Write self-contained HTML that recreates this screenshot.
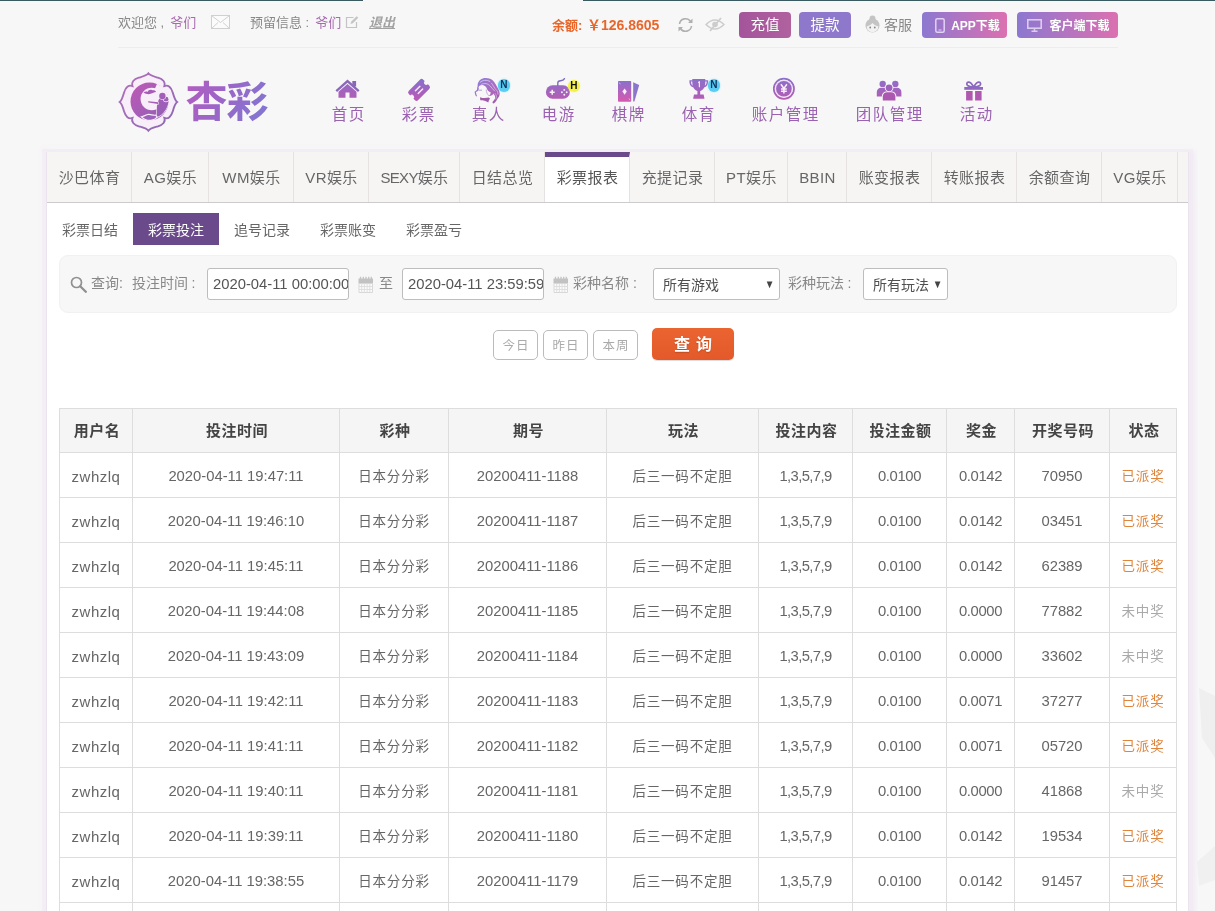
<!DOCTYPE html>
<html lang="zh-CN">
<head>
<meta charset="utf-8">
<title>彩票投注</title>
<style>
*{box-sizing:border-box;margin:0;padding:0}
html,body{width:1215px;height:911px;overflow:hidden}
body{background:#f8f7f8;font-family:"Liberation Sans","Noto Sans CJK SC",sans-serif;color:#666;font-size:14px;position:relative}
#wrap{position:absolute;left:0;top:0;width:1215px;height:911px;overflow:hidden;will-change:transform}
.abs{position:absolute}
.topline{position:absolute;top:0;height:1px;background:#3a5a62;z-index:3}
.topbar{position:absolute;left:118px;top:0;width:1000px;height:48px;border-bottom:1px solid #efecef}
.topbar .t{position:absolute;top:13px;font-size:13px;line-height:20px;color:#888;white-space:nowrap}
.pur{color:#a86aaf;margin-left:2.500px}
.btn{position:absolute;top:12px;height:26px;border-radius:4px;color:#fff;font-size:14px;line-height:26px;text-align:center;white-space:nowrap}
.nav{position:absolute;top:104px;text-align:center;color:#9a62b0;font-size:15.5px;letter-spacing:1.500px;text-indent:1.500px;line-height:22px;white-space:nowrap;transform:translateX(-50%);margin-left:1px}
.bdg{position:absolute;width:12.600px;height:12.600px;border-radius:50%;font-size:10px;line-height:12.600px;text-align:center;font-weight:bold;font-family:'Liberation Sans',sans-serif}
.box{position:absolute;left:46px;top:152px;width:1143px;height:770px;background:#fff;border:1px solid #ebe4ee;box-shadow:0 1px 0 4px rgba(240,234,243,.55),4px 2px 3px 3px rgba(238,230,242,.4),0 0 5px 5px rgba(240,234,244,.3)}
.tabs{position:absolute;left:0;top:-1px;width:1141px;height:51px;background:#f7f5f4;border-bottom:1px solid #ccc}
.tab{position:absolute;top:0;height:50px;border-right:1px solid #e6e2e2;font-size:15px;letter-spacing:.4px;line-height:51px;text-align:center;color:#666;white-space:nowrap;padding-left:1px}
.tab.on{background:#fff;border-top:5px solid #6b4a8b;height:50px;line-height:41px;color:#555}
.sub{position:absolute;top:60px;height:32px;line-height:35px;font-size:14px;color:#666;text-align:center;white-space:nowrap}
.sub.on{background:#6b4a8b;color:#fff}
.search{position:absolute;left:12px;top:102px;width:1118px;height:58px;background:#f7f7f7;border:1px solid #f1f1f1;border-radius:9px}
.search .l{position:absolute;top:17px;font-size:14px;line-height:20px;color:#888;white-space:nowrap}
.inp{position:absolute;top:12px;height:32px;border:1px solid #bdbdbd;border-radius:3px;background:#fff;font-size:14.800px;line-height:30px;color:#555;padding-left:5px;white-space:nowrap;overflow:hidden}
.inp.sel{font-size:14px;padding-left:9px;line-height:33px;color:#505050}
.arr{position:absolute;top:-1px;font-size:11.500px;color:#444;transform:scaleX(.85)}
.qb{position:absolute;top:177px;height:30px;width:45px;border:1px solid #bbb;border-radius:5px;background:#fff;color:#aaa;font-size:12.500px;letter-spacing:1px;text-indent:1px;line-height:30px;text-align:center}
.go{position:absolute;left:605px;top:175px;width:82px;height:32px;border-radius:5px;background:linear-gradient(#ea6430,#e4592a);color:#fff;font-size:16px;font-weight:bold;word-spacing:1.500px;line-height:33px;text-align:center;text-shadow:0 1px 1px rgba(120,40,0,.35);box-shadow:0 1px 1px rgba(0,0,0,.15)}
table{position:absolute;left:12px;top:255px;width:1117px;border-collapse:collapse;table-layout:fixed}
th,td{border:1px solid #ddd;height:45px;text-align:center;font-size:14px;color:#666;white-space:nowrap;overflow:hidden;padding:0}
th{background:#f5f5f5;color:#444;font-weight:bold;font-size:15px;letter-spacing:.5px;padding-bottom:2px;padding-left:2px;height:44.4px}
td.u{font-size:15px;letter-spacing:.5px;padding-top:2px}
td.n{font-size:14.800px;padding-top:1px}
td.k{letter-spacing:-.6px}
td.m{letter-spacing:-.35px}
td.c{font-size:13.500px;letter-spacing:.8px;padding-bottom:0}
td.win{color:#e0843a}
td.no{color:#aaa}
</style>
</head>
<body>
<div id="wrap">
<div class="topline" style="left:0;width:363px"></div>
<div class="topline" style="left:583px;width:632px"></div>
<div class="topbar">
  <span class="t" style="left:0">欢迎您 , <span class="pur">爷们</span></span>
  <svg class="abs" style="left:93px;top:15px" width="19" height="14" viewBox="0 0 19 14"><rect x=".5" y=".5" width="18" height="13" fill="#fbfbfb" stroke="#d0d0d0"/><path d="M.5 .5l9 7 9-7M.5 13.500l6.500-6M18.500 13.500l-6.500-6" fill="none" stroke="#d0d0d0"/></svg>
  <span class="t" style="left:132px">预留信息 : <span class="pur">爷们</span></span>
  <svg class="abs" style="left:227px;top:15.500px" width="14" height="13" viewBox="0 0 14 13"><path d="M8.500 1.500H1.500v10h10V6" fill="none" stroke="#c4c4c4" stroke-width="1.200"/><path d="M5.500 8l.8-2.400 5.400-5.400 1.600 1.600-5.400 5.400z" fill="#c4c4c4"/></svg>
  <span class="t" style="left:251px;font-style:italic;font-weight:bold;text-decoration:underline;color:#a2a2a2">退出</span>
  <span class="t" style="left:434px;top:15px;color:#e8662a;font-weight:bold;font-size:13px">余额: <span style="font-size:14px;margin-left:1px">￥126.8605</span></span>
  <svg class="abs" style="left:559px;top:17px" width="17" height="16" viewBox="0 0 17 16"><path d="M2.500 7a6 6 0 0 1 11-2.500M14.500 9a6 6 0 0 1-11 2.500" fill="none" stroke="#b0b0b0" stroke-width="1.600"/><path d="M15.500 1.500v4.500h-4.500zM1.500 14.500v-4.500h4.500z" fill="#b0b0b0"/></svg>
  <svg class="abs" style="left:587px;top:17px" width="20" height="15" viewBox="0 0 20 15"><path d="M1 7.500q9-9 18 0q-9 9-18 0z" fill="none" stroke="#cdcdcd" stroke-width="1.500"/><circle cx="10" cy="7.500" r="2.800" fill="#cdcdcd"/><path d="M16 1L5 14" stroke="#cdcdcd" stroke-width="1.700"/></svg>
  <div class="btn" style="left:621px;width:52px;background:linear-gradient(90deg,#a4549a,#b0629f);font-size:14.500px">充值</div>
  <div class="btn" style="left:681px;width:52px;background:#8e78cc;font-size:14.500px">提款</div>
  <svg class="abs" style="left:746px;top:15px" width="17" height="18" viewBox="0 0 17 18"><circle cx="8.500" cy="3.500" r="3" fill="#c4c4c4"/><circle cx="8.500" cy="10.500" r="7" fill="#c4c4c4"/><path d="M2.700 11.500q3.500-.5 5.800-3.500 2.300 3 5.800 3.500a5.800 5.800 0 0 1-11.600 0z" fill="#f2f2f2"/><circle cx="6.200" cy="12.500" r=".9" fill="#888"/><circle cx="10.800" cy="12.500" r=".9" fill="#888"/></svg>
  <span class="t" style="left:766px;top:15px;font-size:14px;color:#888">客服</span>
  <div class="btn" style="left:804px;width:85px;background:linear-gradient(90deg,#8c78d0,#dc70b0);font-size:12px;padding-left:22px;font-weight:bold;line-height:28px">APP下载</div>
  <svg class="abs" style="left:817px;top:18px" width="10" height="15" viewBox="0 0 10 15"><rect x=".8" y=".8" width="8.400" height="13.400" rx="1.500" fill="none" stroke="#e2d2f4" stroke-width="1.500"/><path d="M3.500 12h3" stroke="#e2d2f4"/></svg>
  <div class="btn" style="left:899px;width:101px;background:linear-gradient(90deg,#8c78d0,#dc70b0);font-size:12px;padding-left:24px;font-weight:bold;line-height:28px">客户端下载</div>
  <svg class="abs" style="left:909px;top:19px" width="15" height="13" viewBox="0 0 15 13"><rect x=".8" y=".8" width="13.400" height="8.400" fill="none" stroke="#dcccf0" stroke-width="1.600"/><path d="M4.500 12.200h6M7.500 9v3" stroke="#dcccf0" stroke-width="1.500"/></svg>
</div>

<div class="nav" style="left:347px">首页</div>
<div class="nav" style="left:417px">彩票</div>
<div class="nav" style="left:487px">真人</div>
<div class="nav" style="left:557px">电游</div>
<div class="nav" style="left:627px">棋牌</div>
<div class="nav" style="left:697px">体育</div>
<div class="nav" style="left:784px">账户管理</div>
<div class="nav" style="left:888px">团队管理</div>
<div class="nav" style="left:975px">活动</div>
<svg class="abs" style="left:110px;top:62px" width="170" height="80" viewBox="110 62 170 80">
<defs>
<linearGradient id="lg1" gradientUnits="userSpaceOnUse" x1="125" y1="78" x2="172" y2="126"><stop offset="0" stop-color="#c557b5"/><stop offset="1" stop-color="#8a62b8"/></linearGradient>
<linearGradient id="lg2" gradientUnits="userSpaceOnUse" x1="186" y1="80" x2="268" y2="120"><stop offset="0" stop-color="#b45cc0"/><stop offset=".45" stop-color="#9a66c8"/><stop offset="1" stop-color="#8078d2"/></linearGradient>
<linearGradient id="lg3" gradientUnits="userSpaceOnUse" x1="120" y1="75" x2="178" y2="130"><stop offset="0" stop-color="#b070b8"/><stop offset="1" stop-color="#8a68b4"/></linearGradient>
</defs>
<path d="M132.40 86.00C131.00 82.20 133.80 79.20 138.80 77.70C142.80 76.50 146.70 75.60 148.40 73.30C150.10 75.60 154.00 76.50 158.00 77.70C163.00 79.20 165.80 82.20 164.40 86.00C168.20 84.60 171.20 87.40 172.70 92.40C173.90 96.40 174.80 100.30 177.10 102.00C174.80 103.70 173.90 107.60 172.70 111.60C171.20 116.60 168.20 119.40 164.40 118.00C165.80 121.80 163.00 124.80 158.00 126.30C154.00 127.50 150.10 128.40 148.40 130.70C146.70 128.40 142.80 127.50 138.80 126.30C133.80 124.80 131.00 121.80 132.40 118.00C128.60 119.40 125.60 116.60 124.10 111.60C122.90 107.60 122.00 103.70 119.70 102.00C122.00 100.30 122.90 96.40 124.10 92.40C125.60 87.40 128.60 84.60 132.40 86.00z" fill="#f8eef9" stroke="url(#lg3)" stroke-width="1.900" stroke-linejoin="miter"/>
<circle cx="149.500" cy="101.500" r="19" fill="url(#lg1)"/>
<circle cx="151.800" cy="99" r="11.200" fill="#f8eef9"/>
<path d="M149.500 101.500L157 83.800L165 88.500L168.500 97z" fill="#f8eef9"/>
<path d="M143.500 92.500c1.500-1.200 3-1.200 4-.6.800-1.800 3-2.600 4.800-1.600 1.600-.5 3.200.2 3.800 1.600-2 .2-3.600 1-5.400 1.800-2.400 1-4.800.2-7.200-1.200z" fill="#a85ab8"/>
<g fill="url(#lg1)" stroke="#f8eef9" stroke-width="1.100" paint-order="stroke">
<path d="M159.300 98.600c-1.900 3.600-2.700 7.200-2.400 11.200.2 2.600.2 5.200-.9 7.800 4-1.200 7.300-3.900 9.500-7.500 2-3.200 3.100-6.900 3-10.600l-3.600-2.700z"/>
<circle cx="166" cy="99.200" r="2.400"/>
<circle cx="162.400" cy="96" r="3.200"/>
<path d="M158.200 102.200l-9.600-.9c-.7 0-.7 1.100 0 1.200l9.400 1.600z"/>
</g>
<path d="M141.500 116.800c2.500-.2 4.200-2.200 7-2.400 2.500-.2 4.500 1.200 7 .8l1.500 1.500c-1 2-3.200 3.200-6.200 3.600-3.500.3-6.800-1-9.300-3.500z" fill="#9a62b8" stroke="#f8eef9" stroke-width="1.200"/>
<text x="185.500" y="117" font-family="'Liberation Sans','Noto Sans CJK SC',sans-serif" font-weight="700" font-size="42" letter-spacing="-1" fill="url(#lg2)">杏彩</text>
</svg>

<svg class="abs" style="left:320px;top:70px" width="680" height="40" viewBox="320 70 680 40">
<defs>
<linearGradient id="gv" gradientUnits="userSpaceOnUse" x1="0" y1="78" x2="0" y2="102"><stop offset="0" stop-color="#8a70cc"/><stop offset="1" stop-color="#b85ab0"/></linearGradient>
<linearGradient id="gcard" gradientUnits="userSpaceOnUse" x1="0" y1="81" x2="0" y2="102"><stop offset="0" stop-color="#8a70cc"/><stop offset="1" stop-color="#d858b0"/></linearGradient>
<linearGradient id="gtk" gradientUnits="userSpaceOnUse" x1="7.400" y1="-7.400" x2="-7.400" y2="7.400"><stop offset="0" stop-color="#8570cc"/><stop offset="1" stop-color="#bb58b4"/></linearGradient>
<linearGradient id="ghair" gradientUnits="userSpaceOnUse" x1="478" y1="78" x2="498" y2="102"><stop offset="0" stop-color="#8c80d8"/><stop offset=".6" stop-color="#b068c0"/><stop offset="1" stop-color="#9a58a8"/></linearGradient>
</defs>
<!-- home -->
<path d="M347.500 79.600l12 10.600-1.500 1.700-10.500-9.200-10.500 9.200-1.500-1.700z" fill="#8a68b8"/>
<rect x="352.300" y="81" width="3.800" height="5.500" fill="#8a68b8"/>
<path d="M338.500 91.800l9-7.800 9 7.800v6h-7v-5.400h-4v5.400h-7z" fill="url(#gv)"/>
<!-- ticket -->
<g transform="translate(419.050 89.850) rotate(-45)">
<path d="M-7.800 -6.600h15.600a2.400 2.400 0 0 1 2.400 2.400v1.900a2.300 2.300 0 0 0 0 4.600v1.900a2.400 2.400 0 0 1-2.400 2.400h-15.600a2.400 2.400 0 0 1-2.400-2.400v-1.900a2.300 2.300 0 0 0 0-4.600v-1.900a2.400 2.400 0 0 1 2.400-2.400z" fill="url(#gtk)"/>
<rect x="-3.800" y="-2.700" width="7.600" height="1.500" rx=".6" fill="#f6eaf8"/>
<rect x="-3.800" y="1.200" width="7.600" height="1.500" rx=".6" fill="#f6eaf8"/>
</g>
<!-- girl -->
<path d="M477.600 84.800c.6-4.400 3.900-6.900 8.200-6.900 5 0 8.200 2.800 10 6.500 1.500 3 3.800 5.500 3.900 9 .1 3-1.800 4.200-2.700 6-.8 1.700-2.200 3.400-3.800 4.200-.8-.6-.9-1.500-.3-2.100 1.200-1.300 2.300-2.500 2.300-4.200 0-1.500-1.100-2.400-1.600-3.700-1 1.600-2.700 2.500-4.600 2.300 1.200-1 1.800-2.300 1.500-3.900-1.800-.4-3-1.500-3.500-3.100-.7-1.800-2-3-3.800-3.600-2-.6-3.800.3-4.700 2 .5 1.200.4 2.200-.3 3.100-.6.800-1.500 1.100-2.300 1.500.1 1.500.6 2.800 1.200 4.100l-.9.600c-.9-1.500-1.600-3.200-1.500-5.100.9-.4 1.800-.9 2.200-1.800.5-1-.1-2.200.7-3.300z" fill="url(#ghair)"/>
<g fill="none" stroke="#efe6fa" stroke-linecap="round" opacity=".75">
<path d="M480.200 82.200c2.600-2.300 6.400-2.600 9.600-.8" stroke-width=".9"/>
<path d="M481.500 84.300c3-1.500 6.300-.8 8.600 1.600 1.600 1.700 2.800 3.700 4.600 5.200" stroke-width=".8"/>
<path d="M491.500 83.200c1.800 2.200 2.600 4.800 4.800 6.800 1.200 1.100 1.800 2.500 1.700 4.200" stroke-width=".8"/>
<path d="M495.200 93.500c1.400 1.600 1.700 3.600.6 5.500" stroke-width=".7"/>
</g>
<path d="M486.200 89.600c.2 2.600 1 4.800 2.900 6.300" fill="none" stroke="#b29cd0" stroke-width=".8"/>
<path d="M480 97.200c2.600 1 5.600 1.200 8.800.4l1.200 1c-1 1.300-1.500 2.600-1.700 4-2.300-1.700-5.200-2.300-8-2.300z" fill="#a05aa8"/>
<path d="M478.500 90.200h3.500" stroke="#a898c8" stroke-width=".9" fill="none"/>
<!-- gamepad -->
<rect x="545.900" y="85.200" width="24" height="13.500" rx="6.700" fill="url(#gv)"/>
<path d="M549.700 92.300h5M552.200 89.800v5" stroke="#fbeffa" stroke-width="1.500" fill="none"/>
<g fill="#fbeffa"><circle cx="564.300" cy="89.900" r=".95"/><circle cx="564.300" cy="94.700" r=".95"/><circle cx="561.900" cy="92.300" r=".95"/><circle cx="566.700" cy="92.300" r=".95"/></g>
<path d="M557.800 85.400v-2.600c0-1.600 1.400-2 2.800-2.100 1.600-.1 3-.5 3.900-2" stroke="#7d6cbc" stroke-width="1.400" fill="none" stroke-linecap="round"/>
<!-- cards -->
<path d="M633.200 82.300l6 2.800-4.800 16.300h-1.200z" fill="#8c76cc"/>
<rect x="618" y="81" width="13.200" height="20.700" rx=".8" fill="url(#gcard)"/>
<path d="M624.600 88.400l2.200 3.200-2.200 3.200-2.200-3.200z" fill="#fbeffa"/>
<path d="M619.300 82.600l1 1.600M629 98.500l1 1.600" stroke="#e8c8ec" stroke-width=".8"/>
<!-- trophy -->
<path d="M692.300 79h13v1.200h2.900c.3 3.600-1 6.300-4 7.400-.9 1.700-2.200 2.900-4 3.400v3.600h3.400l.9 4.100h-11.400l.9-4.100h3.400V91c-1.800-.5-3.100-1.700-4-3.400-3-1.100-4.300-3.800-4-7.400h2.900z" fill="url(#gv)"/>
<path d="M690.900 81.400c0 2 .6 3.500 1.900 4.400-.4-1.400-.5-2.900-.5-4.400zM706.700 81.400c0 2-.6 3.500-1.900 4.400.4-1.400.5-2.900.5-4.400z" fill="#f4e6f6"/>
<path d="M698.100 82.600l1.300-.6v5.200" stroke="#f4e6f6" stroke-width="1.200" fill="none"/>
<!-- yen -->
<circle cx="783.900" cy="88.700" r="10.100" fill="none" stroke="url(#gv)" stroke-width="1.700"/>
<circle cx="783.900" cy="88.700" r="8.700" fill="#f0d8f4"/>
<circle cx="783.900" cy="88.700" r="7.800" fill="url(#gv)"/>
<path d="M780.900 84.300l3 4.100 3-4.100M783.900 88.400v5M781 89h5.800M781 91.300h5.800" stroke="#fbeffa" stroke-width="1.500" fill="none"/>
<!-- team -->
<g fill="url(#gv)">
<circle cx="882.700" cy="83.900" r="3.200"/><path d="M876.800 96.500v-4.500c0-2.600 2-4.200 4.300-4.200h3.200c2.300 0 4.300 1.600 4.300 4.200v4.500z"/>
<circle cx="895.300" cy="83.900" r="3.200"/><path d="M889.600 96.500v-4.500c0-2.600 2-4.200 4.300-4.200h3.200c2.300 0 4.300 1.600 4.300 4.200v4.500z"/>
</g>
<circle cx="889.100" cy="87.800" r="4.300" fill="#f8f7f8"/><path d="M881.900 101v-4.800c0-3 2.200-4.800 4.800-4.800h4.800c2.600 0 4.800 1.800 4.800 4.800v4.800z" fill="#f8f7f8"/>
<circle cx="889.100" cy="87.800" r="3.400" fill="#9a62bc"/><path d="M882.800 100.400v-4c0-2.600 2-4.200 4.300-4.200h4c2.300 0 4.300 1.600 4.300 4.200v4z" fill="#ac58b0"/>
<!-- gift -->
<rect x="964.300" y="87" width="18.700" height="2.800" fill="#9068c0"/>
<path d="M966.100 91h6.500v9.400h-6.500zM975.100 91h6.500v9.400h-6.500z" fill="#b058b0"/>
<path d="M973.700 87c-1.500-2.600-3.300-5-5.300-4.800-1.700.2-2.200 2.200-.8 3.300 1.500 1.100 3.800 1.400 6.100 1.500 2.300-.1 4.600-.4 6.100-1.500 1.400-1.100.9-3.100-.8-3.300-2-.2-3.800 2.200-5.300 4.800z" fill="none" stroke="#8a68c0" stroke-width="1.700" stroke-linejoin="round"/>
</svg>
<div class="bdg" style="left:497.600px;top:79.300px;background:#5ccdf2;box-shadow:0 0 2px #8fe6f6;color:#0a3560">N</div>
<div class="bdg" style="left:567.700px;top:79.700px;background:#f5f14a;box-shadow:0 0 2px #f7f590;color:#111">H</div>
<div class="bdg" style="left:707.600px;top:79px;background:#5ccdf2;box-shadow:0 0 2px #8fe6f6;color:#0a3560">N</div>

<svg class="abs bgdeco" style="left:1189px;top:600px" width="26" height="311" viewBox="1189 600 26 311"><path d="M1199 688l16 8v62l-13-20z" fill="#f0eff0"/><path d="M1197 862l18-16v34l-16 6z" fill="#f1f0f1"/></svg>
<div class="box">
<div class="tabs">
<div class="tab" style="left:0px;width:85px">沙巴体育</div>
<div class="tab" style="left:85px;width:77px">AG娱乐</div>
<div class="tab" style="left:162px;width:85px">WM娱乐</div>
<div class="tab" style="left:247px;width:75px">VR娱乐</div>
<div class="tab" style="left:322px;width:91px"><span style="letter-spacing:-.7px">SEXY</span>娱乐</div>
<div class="tab" style="left:413px;width:85px">日结总览</div>
<div class="tab on" style="left:498px;width:85px">彩票报表</div>
<div class="tab" style="left:583px;width:85px">充提记录</div>
<div class="tab" style="left:668px;width:73px">PT娱乐</div>
<div class="tab" style="left:741px;width:59px">BBIN</div>
<div class="tab" style="left:800px;width:85px">账变报表</div>
<div class="tab" style="left:885px;width:85px">转账报表</div>
<div class="tab" style="left:970px;width:85px">余额查询</div>
<div class="tab" style="left:1055px;width:76px">VG娱乐</div>
</div>
<div class="sub" style="left:0px;width:86px">彩票日结</div>
<div class="sub on" style="left:86px;width:86px">彩票投注</div>
<div class="sub" style="left:172px;width:86px">追号记录</div>
<div class="sub" style="left:258px;width:86px">彩票账变</div>
<div class="sub" style="left:344px;width:86px">彩票盈亏</div>
<div class="search">
  <svg class="abs" style="left:10px;top:19.5px" width="17" height="17" viewBox="0 0 17 17"><circle cx="6.500" cy="6.500" r="5" fill="none" stroke="#909090" stroke-width="1.700"/><path d="M10.200 10.200l5.600 5.600" stroke="#909090" stroke-width="2.300" stroke-linecap="round"/></svg>
  <span class="l" style="left:31px">查询:</span>
  <span class="l" style="left:72px">投注时间<span style="margin-left:3.5px">:</span></span>
  <div class="inp" style="left:147px;width:142px">2020-04-11 00:00:00</div>
  <svg class="abs cal" style="left:297.5px;top:19.5px" width="16" height="17" viewBox="0 0 16 17"><path d="M.5 2.500h14.500v5h-14.500z" fill="#c2c2c2"/><path d="M2.500 .8v2.500M5.300 .8v2.500M8 .8v2.500M10.700 .8v2.500M13.300 .8v2.500" stroke="#c4c4c4" stroke-width="1.300"/><path d="M1 7.500h13.500v9h-13.500z" fill="#fafafa" stroke="#d8d8d8"/><path d="M3.700 8v8M6.400 8v8M9.100 8v8M11.800 8v8M1 10.500h13.500M1 13.500h13.500" stroke="#dcdcdc" stroke-width=".9"/></svg>
  <span class="l" style="left:319px">至</span>
  <div class="inp" style="left:342px;width:142px">2020-04-11 23:59:59</div>
  <svg class="abs cal" style="left:492.5px;top:19.5px" width="16" height="17" viewBox="0 0 16 17"><path d="M.5 2.500h14.500v5h-14.500z" fill="#c2c2c2"/><path d="M2.500 .8v2.500M5.300 .8v2.500M8 .8v2.500M10.700 .8v2.500M13.300 .8v2.500" stroke="#c4c4c4" stroke-width="1.300"/><path d="M1 7.500h13.500v9h-13.500z" fill="#fafafa" stroke="#d8d8d8"/><path d="M3.700 8v8M6.400 8v8M9.100 8v8M11.800 8v8M1 10.500h13.500M1 13.500h13.500" stroke="#dcdcdc" stroke-width=".9"/></svg>
  <span class="l" style="left:513px">彩种名称<span style="margin-left:4px">:</span></span>
  <div class="inp sel" style="left:593px;width:127px">所有游戏<span class="arr" style="right:4px">▼</span></div>
  <span class="l" style="left:728px">彩种玩法<span style="margin-left:3.5px">:</span></span>
  <div class="inp sel" style="left:803px;width:85px">所有玩法<span class="arr" style="right:4px">▼</span></div>
</div>
<div class="qb" style="left:446px">今日</div>
<div class="qb" style="left:496px">昨日</div>
<div class="qb" style="left:546px">本周</div>
<div class="go">查 询</div>

<table><colgroup><col style="width:73px"><col style="width:207px"><col style="width:109px"><col style="width:158px"><col style="width:152px"><col style="width:94px"><col style="width:94px"><col style="width:68px"><col style="width:95px"><col style="width:67px"></colgroup>
<tr><th>用户名</th><th>投注时间</th><th>彩种</th><th>期号</th><th>玩法</th><th>投注内容</th><th>投注金额</th><th>奖金</th><th>开奖号码</th><th>状态</th></tr>
<tr><td class="u">zwhzlq</td><td class="n">2020-04-11 19:47:11</td><td class="c">日本分分彩</td><td class="n">20200411-1188</td><td class="c">后三一码不定胆</td><td class="n k">1,3,5,7,9</td><td class="n m">0.0100</td><td class="n m">0.0142</td><td class="n">70950</td><td class="c win">已派奖</td></tr>
<tr><td class="u">zwhzlq</td><td class="n">2020-04-11 19:46:10</td><td class="c">日本分分彩</td><td class="n">20200411-1187</td><td class="c">后三一码不定胆</td><td class="n k">1,3,5,7,9</td><td class="n m">0.0100</td><td class="n m">0.0142</td><td class="n">03451</td><td class="c win">已派奖</td></tr>
<tr><td class="u">zwhzlq</td><td class="n">2020-04-11 19:45:11</td><td class="c">日本分分彩</td><td class="n">20200411-1186</td><td class="c">后三一码不定胆</td><td class="n k">1,3,5,7,9</td><td class="n m">0.0100</td><td class="n m">0.0142</td><td class="n">62389</td><td class="c win">已派奖</td></tr>
<tr><td class="u">zwhzlq</td><td class="n">2020-04-11 19:44:08</td><td class="c">日本分分彩</td><td class="n">20200411-1185</td><td class="c">后三一码不定胆</td><td class="n k">1,3,5,7,9</td><td class="n m">0.0100</td><td class="n m">0.0000</td><td class="n">77882</td><td class="c no">未中奖</td></tr>
<tr><td class="u">zwhzlq</td><td class="n">2020-04-11 19:43:09</td><td class="c">日本分分彩</td><td class="n">20200411-1184</td><td class="c">后三一码不定胆</td><td class="n k">1,3,5,7,9</td><td class="n m">0.0100</td><td class="n m">0.0000</td><td class="n">33602</td><td class="c no">未中奖</td></tr>
<tr><td class="u">zwhzlq</td><td class="n">2020-04-11 19:42:11</td><td class="c">日本分分彩</td><td class="n">20200411-1183</td><td class="c">后三一码不定胆</td><td class="n k">1,3,5,7,9</td><td class="n m">0.0100</td><td class="n m">0.0071</td><td class="n">37277</td><td class="c win">已派奖</td></tr>
<tr><td class="u">zwhzlq</td><td class="n">2020-04-11 19:41:11</td><td class="c">日本分分彩</td><td class="n">20200411-1182</td><td class="c">后三一码不定胆</td><td class="n k">1,3,5,7,9</td><td class="n m">0.0100</td><td class="n m">0.0071</td><td class="n">05720</td><td class="c win">已派奖</td></tr>
<tr><td class="u">zwhzlq</td><td class="n">2020-04-11 19:40:11</td><td class="c">日本分分彩</td><td class="n">20200411-1181</td><td class="c">后三一码不定胆</td><td class="n k">1,3,5,7,9</td><td class="n m">0.0100</td><td class="n m">0.0000</td><td class="n">41868</td><td class="c no">未中奖</td></tr>
<tr><td class="u">zwhzlq</td><td class="n">2020-04-11 19:39:11</td><td class="c">日本分分彩</td><td class="n">20200411-1180</td><td class="c">后三一码不定胆</td><td class="n k">1,3,5,7,9</td><td class="n m">0.0100</td><td class="n m">0.0142</td><td class="n">19534</td><td class="c win">已派奖</td></tr>
<tr><td class="u">zwhzlq</td><td class="n">2020-04-11 19:38:55</td><td class="c">日本分分彩</td><td class="n">20200411-1179</td><td class="c">后三一码不定胆</td><td class="n k">1,3,5,7,9</td><td class="n m">0.0100</td><td class="n m">0.0142</td><td class="n">91457</td><td class="c win">已派奖</td></tr>
<tr><td></td><td></td><td></td><td></td><td></td><td></td><td></td><td></td><td></td><td></td></tr>
</table>
</div>
</div>
</body>
</html>
